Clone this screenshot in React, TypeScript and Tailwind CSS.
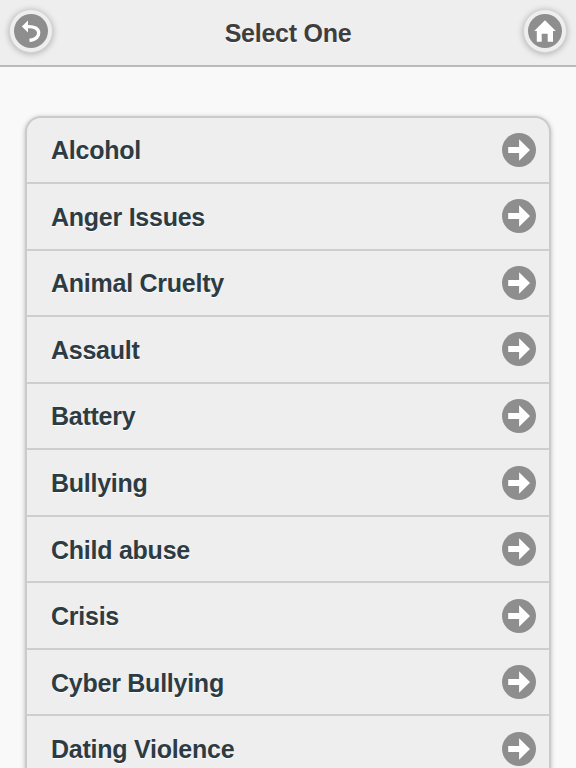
type Topic = { id: string; label: string };

const TOPICS: Topic[] = [
  { id: "alcohol", label: "Alcohol" },
  { id: "anger", label: "Anger Issues" },
  { id: "animal", label: "Animal Cruelty" },
  { id: "assault", label: "Assault" },
  { id: "battery", label: "Battery" },
  { id: "bullying", label: "Bullying" },
  { id: "child", label: "Child abuse" },
  { id: "crisis", label: "Crisis" },
  { id: "cyber", label: "Cyber Bullying" },
  { id: "dating", label: "Dating Violence" },
];

const ROUND_BUTTON =
  "flex h-11 w-11 items-center justify-center rounded-full border border-[#d4d4d4] bg-[#eeeeee] shadow-[0_1px_6px_rgba(0,0,0,0.27)]";

function BackIcon() {
  return (
    <svg viewBox="0 0 34 34" className="h-[34px] w-[34px]">
      <circle cx="17" cy="17" r="17" fill="#8e8e8e" />
      <path d="M7.8 12.6 14 6.6v12z" fill="#fff" />
      <path
        d="M13 12.6c7.4-.4 11.7 1.9 11.7 6.2 0 4-3.4 6.9-9.2 7.7"
        fill="none"
        stroke="#fff"
        strokeWidth="3.3"
      />
    </svg>
  );
}

function HomeIcon() {
  return (
    <svg viewBox="0 0 34 34" className="h-[34px] w-[34px]">
      <circle cx="17" cy="17" r="17" fill="#8e8e8e" />
      <path d="M17 6.2 27.8 17H25v10.8h-5.3v-8h-6v8H8.8V17H6.2z" fill="#fff" />
    </svg>
  );
}

function ArrowIcon() {
  return (
    <svg viewBox="0 0 34 34" className="h-[34px] w-[34px] shrink-0">
      <circle cx="17" cy="17" r="17" fill="#8e8e8e" />
      <path d="M6.2 14h10.9V6.3L28 17 17.1 27.7V20H6.2z" fill="#fff" />
    </svg>
  );
}

export default function App() {
  return (
    <div className="h-screen overflow-hidden bg-[#f9f9f9] font-['Liberation_Sans',Arial,sans-serif] font-bold">
      <header className="flex h-[67px] justify-between border-b-2 border-[#bababa] bg-[#eeeeee] px-[9px] pt-[9px]">
        <button type="button" aria-label="Back" className={ROUND_BUTTON}>
          <BackIcon />
        </button>
        <h1 className="pt-[7px] text-[25px] leading-[34px] tracking-[-0.25px] text-[#3e3e3e] [text-shadow:0_1px_0_#fff]">
          Select One
        </h1>
        <button type="button" aria-label="Home" className={ROUND_BUTTON}>
          <HomeIcon />
        </button>
      </header>

      <ul className="mx-[25px] mt-[48.5px] rounded-t-[16px] border-2 border-b-0 border-[#cbcbcb] bg-[#eeeeee] shadow-[0_1px_5px_rgba(0,0,0,0.25)]">
        {TOPICS.map((topic) => (
          <li
            key={topic.id}
            className="flex h-[66.56px] items-center justify-between border-b-2 border-[#cecece] pr-[13px] pl-6"
          >
            <span className="pt-px text-[25px] leading-[34px] tracking-[-0.25px] text-[#2d3b43] [text-shadow:0_1px_0_#fff]">
              {topic.label}
            </span>
            <ArrowIcon />
          </li>
        ))}
      </ul>
    </div>
  );
}
